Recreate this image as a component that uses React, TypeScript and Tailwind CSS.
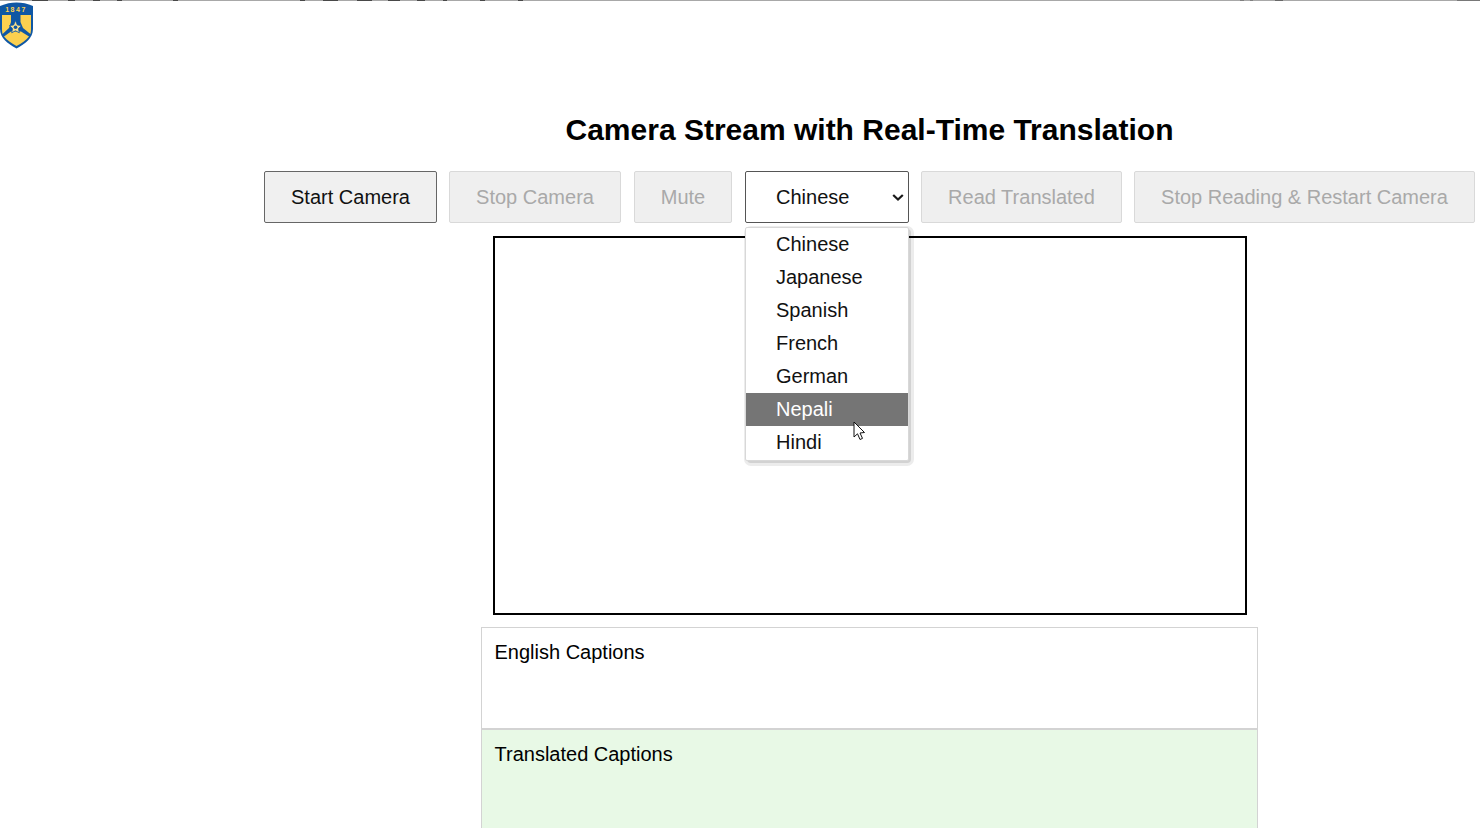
const font = "font-['Liberation_Sans',Arial,sans-serif]";

// thin scan line along the very top of the capture: [width, colour]
const g = "#a8a8a8";
const d = "#484848";
const topLine: [number, string][] = [
  [32, g], [16, d], [20, g], [7, d], [18, g], [7, d], [17, g], [5, d], [51, g], [5, d], [122, g], [5, d],
  [18, g], [15, d], [19, g], [15, d], [16, g], [12, d], [17, g], [8, d], [18, g], [4, d], [33, g], [5, d],
  [33, g], [5, d], [717, g], [4, "#808080"], [6, g], [3, "#808080"], [22, g], [8, "#686868"], [174, g],
];

const languages = ["Chinese", "Japanese", "Spanish", "French", "German", "Nepali", "Hindi"];

function Logo() {
  return (
    <svg width="34" height="48" viewBox="0 0 34 48" className="block">
      <path d="M0 5 C6 2.5 11 1.5 16.5 1.5 C22 1.5 27.5 2.5 33 5 L33 28 C33 37 25 43 16.5 47.5 C8 43 0 37 0 28 Z" fill="#0f57a4" />
      <path d="M2 14 L11 14 L11 21 L9 27 L2.6 33 C2.2 31 2 30 2 28 Z" fill="#fcd04f" />
      <path d="M31 14 L20.5 14 L20.5 21 L23 27 L30.4 33 C30.8 31 31 30 31 28 Z" fill="#fcd04f" />
      <path d="M4 35.5 L11 30.5 L21 30.5 L29 35.5 C26 39.5 21.5 42.5 16.5 45 C12 42.5 7 39.5 4 35.5 Z" fill="#fcd04f" />
      <path d="M15.5 19.5 L17.4 24 L21.6 24.6 L18.5 27.6 L19.3 31.8 L15.5 29.8 L11.7 31.8 L12.5 27.6 L9.4 24.6 L13.6 24 Z" fill="#fce08a" stroke="#0f57a4" strokeWidth="0.8" />
      <circle cx="15.5" cy="26.2" r="1.8" fill="#0f57a4" />
      <text x="16" y="11" textAnchor="middle" fontSize="7" fontWeight="700" letterSpacing="1.5" fill="#fcd04f" fontFamily="Liberation Sans, sans-serif">1847</text>
    </svg>
  );
}

function ActionButton({ label, disabled = false, className }: { label: string; disabled?: boolean; className: string }) {
  return (
    <button
      disabled={disabled}
      className={
        disabled
          ? `${className} h-[52px] shrink-0 rounded-[2px] border border-[#d9d9d9] bg-[#efefef] text-center text-[20px] text-[#a9a9a9]`
          : `${className} h-[52px] shrink-0 rounded-[2px] border border-[#666666] bg-[#f0f0f0] text-center text-[20px] text-[#111111]`
      }
    >
      {label}
    </button>
  );
}

export default function App() {
  return (
    <div className={`${font} relative h-screen overflow-hidden bg-white text-black`}>
      <div className="flex h-px w-full">
        {topLine.map(([w, c], i) => (
          <span key={i} className="h-px" style={{ width: w, backgroundColor: c }} />
        ))}
        <span className="h-px flex-1 bg-[#787878]" />
      </div>
      <div className="flex">
        <aside className="w-[264px] shrink-0">
          <Logo />
        </aside>
        <main className="flex w-[1211px] shrink-0 flex-col items-center pt-[111px]">
          <h1 className="h-[36px] text-center text-[30px] leading-[36px] font-bold">
            Camera Stream with Real-Time Translation
          </h1>
          <div className="mt-[23px] flex w-full gap-3">
            <ActionButton label="Start Camera" className="w-[173px]" />
            <ActionButton label="Stop Camera" className="w-[172px]" disabled />
            <ActionButton label="Mute" className="ml-px w-[98px]" disabled />
            <div className="relative ml-px w-[164px] shrink-0">
              <select className="h-[52px] w-full appearance-none rounded-[2px] border border-[#555555] bg-white pl-[30px] text-[20px] text-[#111111]">
                {languages.map((l) => (
                  <option key={l}>{l}</option>
                ))}
              </select>
              <svg width="12" height="9" viewBox="0 0 12 9" className="pointer-events-none absolute top-[22px] left-[147px]">
                <path d="M1.2 2 L6 6.6 L10.8 2" fill="none" stroke="#1a1a1a" strokeWidth="2.2" />
              </svg>
              {/* shadow sits under the video frame's border, the list itself over it */}
              <div className="absolute top-[56px] left-0 h-[234px] w-[164px] rounded-[4px] shadow-[2px_2px_0_0_#d2d2d2,2px_2px_0_3px_#ececec]" />
              <ul className="absolute top-[56px] left-0 z-10 w-[164px] rounded-[2px] border border-[#d8d8d8] bg-white pb-px">
                {languages.map((l) => (
                  <li
                    key={l}
                    className={
                      l === "Nepali"
                        ? "h-[33px] bg-[#757575] pl-[30px] text-[20px] leading-[33px] text-white"
                        : "h-[33px] pl-[30px] text-[20px] leading-[33px] text-[#111111]"
                    }
                  >
                    {l}
                  </li>
                ))}
              </ul>
              <svg width="13" height="21" viewBox="0 0 13 21" className="absolute top-[250px] left-[108px] z-20">
                <path d="M1 1 L1 16 L4.5 12.8 L7 18.5 L9.5 17.4 L7 12 L11.5 11.5 Z" fill="#ffffff" stroke="#111111" strokeWidth="1" strokeLinejoin="round" />
              </svg>
            </div>
            <ActionButton label="Read Translated" className="w-[201px]" disabled />
            <ActionButton label="Stop Reading & Restart Camera" className="w-[341px]" disabled />
          </div>
          <div className="relative z-[1] mt-[13px] h-[379px] w-[754px] border-2 border-black" />
          <div className="mt-[12px] h-[102px] w-[777px] border border-[#d3d3d3] py-[10px] pr-[13px] pl-[12.5px] text-[20px] leading-[28px]">
            English Captions
          </div>
          <div className="h-[102px] w-[777px] border border-[#d3d3d3] bg-[#e8f9e6] pt-[10px] pr-[13px] pl-[12.5px] text-[20px] leading-[28px]">
            Translated Captions
          </div>
        </main>
      </div>
    </div>
  );
}
